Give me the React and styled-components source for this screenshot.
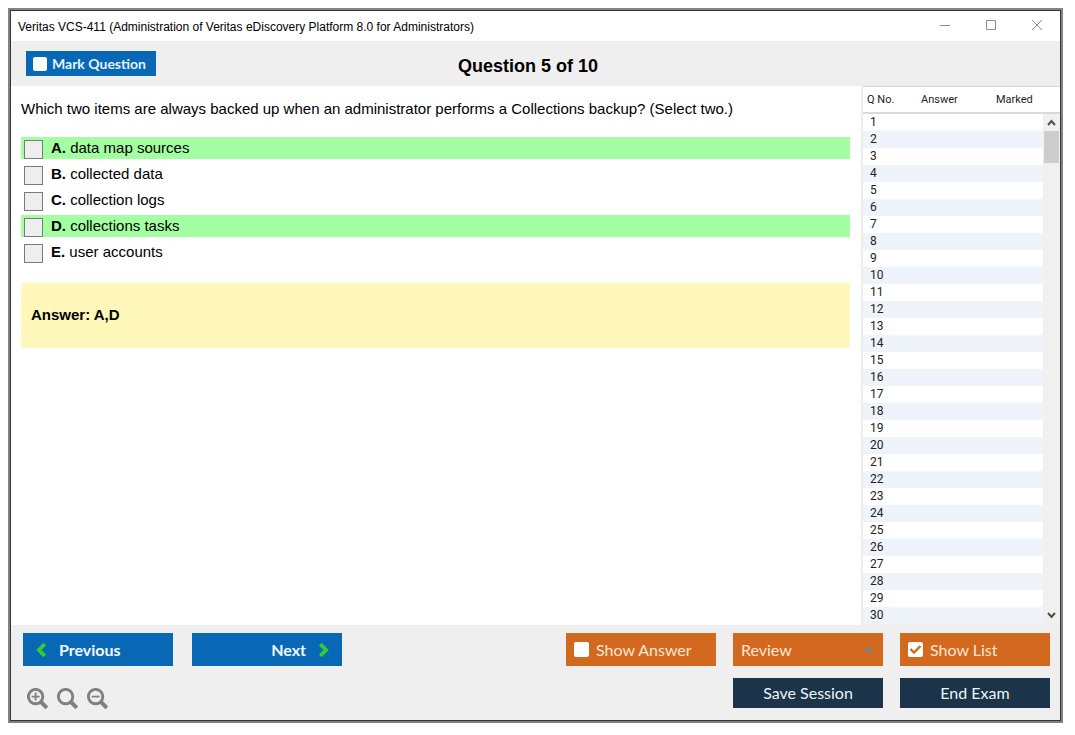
import React from "react";
import styled, { createGlobalStyle, css } from "styled-components";

const GlobalStyle = createGlobalStyle`
  *, *::before, *::after { box-sizing: border-box; }
  body {
    margin: 8px 12px 12px 8px;
    background: #fff;
    color: #000;
    font-family: "Liberation Sans", Arial, sans-serif;
  }
  button, select, input { margin: 0; font: inherit; }
`;

const Window = styled.div`
  display: flex;
  flex-direction: column;
  min-height: calc(100vh - 20px);
  border: 2px solid #828282;
`;

const Frame = styled.div`
  flex: 1;
  display: flex;
  flex-direction: column;
  border: 1px solid #38363a;
`;

const TitleBar = styled.div`
  display: flex;
  align-items: center;
  height: 30px;
  padding-left: 7px;
`;

const Title = styled.span`
  flex: 1;
  padding-top: 2px;
  font-size: 12px;
  line-height: 16px;
`;

const WindowButton = styled.button`
  display: flex;
  align-items: center;
  justify-content: center;
  width: 46px;
  height: 30px;
  padding: 0;
  border: 0;
  background: transparent;
  color: #8c8c8c;
`;

const Header = styled.header`
  display: grid;
  grid-template-columns: 1fr auto 1fr;
  align-items: center;
  height: 45px;
  padding: 0 30px 0 15px;
  background: #efefef;
`;

const Heading = styled.h1`
  margin: 0;
  padding-top: 4px;
  font-size: 18px;
  line-height: 24px;
`;

const MarkToggle = styled.label`
  display: flex;
  align-items: center;
  justify-self: start;
  gap: 5px;
  width: 130px;
  height: 25px;
  padding: 0 7px;
  background: #0868b6;
  color: #e6f1fb;
  font: bold 14px/20px Lato, sans-serif;
  white-space: nowrap;
`;

const ToggleBox = styled.input`
  appearance: none;
  flex: none;
  width: ${(p) => p.$size}px;
  height: ${(p) => p.$size}px;
  border-radius: 2px;
  background: #fff;
  &:checked {
    background: #fff
      url("data:image/svg+xml,%3Csvg xmlns='http://www.w3.org/2000/svg' viewBox='0 0 15 15'%3E%3Cpath d='M2.5 7l3.5 3.5L12.5 4' fill='none' stroke='%23d2691e' stroke-width='2.4'/%3E%3C/svg%3E");
  }
`;

const Main = styled.main`
  flex: 1;
  display: flex;
`;

const Content = styled.section`
  flex: 1;
  padding: 13px 11px 0 10px;
  font-size: 15px;
  line-height: 20px;
`;

const Question = styled.p`
  margin: 0 0 18px;
`;

const Options = styled.div`
  display: flex;
  flex-direction: column;
  gap: 4px;
`;

const Option = styled.label`
  display: flex;
  align-items: flex-start;
  gap: 8px;
  height: 22px;
  padding-left: 3px;
  line-height: 22px;
  ${(p) => p.$correct && css`background: #a2ffa2;`}
`;

const OptionBox = styled.input`
  appearance: none;
  width: 19px;
  height: 19px;
  margin-top: 3px;
  border: 1px solid #7b7b7b;
  background: #eee;
  &:checked { background: #555; }
`;

const AnswerBox = styled.div`
  margin-top: 20px;
  padding: 22px 10px 23px;
  background: #fff8ba;
  font-weight: bold;
`;

const ListPanel = styled.aside`
  display: flex;
  align-items: stretch;
  border: solid #ededed;
  border-width: 0 0 1px 2px;
`;

const ListTable = styled.table`
  width: 180px;
  border-spacing: 0;
  table-layout: fixed;
  font-family: Roboto, sans-serif;
  color: #222;
`;

const HeadCell = styled.th`
  width: ${(p) => p.$width};
  height: 28px;
  padding: 0 0 0 4px;
  border-top: 1px solid #d4d4d4;
  border-bottom: 2px solid #d9d9d9;
  font-size: 11px;
  font-weight: normal;
  line-height: 16px;
  text-align: left;
`;

const ListRow = styled.tr`
  &:nth-child(even) { background: #eef4f9; }
`;

const ListCell = styled.td`
  height: 17px;
  padding: 0 0 0 7px;
  font-size: 12px;
  line-height: 17px;
`;

const ScrollColumn = styled.div`
  display: flex;
  flex-direction: column;
  width: 17px;
`;

const ScrollCorner = styled.div`
  height: 28px;
  border-top: 1px solid #d4d4d4;
  border-bottom: 2px solid #d9d9d9;
`;

const ScrollTrack = styled.div`
  flex: 1;
  display: flex;
  flex-direction: column;
  background: #f0f0f0;
`;

const ScrollButton = styled.button`
  display: flex;
  align-items: center;
  justify-content: center;
  height: 17px;
  padding: 0;
  border: 0;
  background: transparent;
  color: #505050;
`;

const ScrollThumb = styled.div`
  height: 32px;
  margin: 0 1px;
  background: #cdcdcd;
`;

const ScrollSpace = styled.div`
  flex: 1;
`;

const Footer = styled.footer`
  display: flex;
  flex-direction: column;
  gap: 12px;
  padding: 8px 10px 10px 12px;
  background: #efefef;
`;

const FooterRow = styled.div`
  display: flex;
  justify-content: space-between;
  align-items: flex-start;
`;

const Group = styled.div`
  display: flex;
  gap: ${(p) => p.$gap}px;
`;

const control = css`
  display: flex;
  align-items: center;
  width: 150px;
  height: 33px;
  border: 0;
  white-space: nowrap;
`;

const NavButton = styled.button`
  ${control}
  justify-content: ${(p) => (p.$end ? "flex-end" : "flex-start")};
  gap: 13px;
  padding: 0 13px;
  background: #0868b6;
  color: #f2f8fd;
  font: bold 16px/20px Lato, sans-serif;
`;

const OrangeToggle = styled.label`
  ${control}
  gap: 7px;
  padding: 0 8px;
  background: #d2691e;
  color: #fbe6d6;
  font: 16px/20px Lato, sans-serif;
`;

const SelectWrap = styled.div`
  position: relative;
`;

const ReviewSelect = styled.select`
  ${control}
  appearance: none;
  padding: 0 8px;
  border-radius: 0;
  background: #d2691e;
  color: #fbe6d6;
  font: 16px/20px Lato, sans-serif;
`;

const SelectArrow = styled.svg`
  position: absolute;
  top: 13px;
  right: 9px;
  pointer-events: none;
`;

const DarkButton = styled.button`
  ${control}
  justify-content: center;
  height: 30px;
  padding: 0;
  background: #1b344a;
  color: #eef3f7;
  font: 16px/20px Lato, sans-serif;
`;

const ZoomGroup = styled(Group)`
  padding: 10px 0 0 4px;
`;

const ZoomButton = styled.button`
  display: flex;
  padding: 0;
  border: 0;
  background: transparent;
  color: #808080;
`;

const OPTIONS = [
  { letter: "A", text: "data map sources", correct: true },
  { letter: "B", text: "collected data" },
  { letter: "C", text: "collection logs" },
  { letter: "D", text: "collections tasks", correct: true },
  { letter: "E", text: "user accounts" },
];

const ROWS = Array.from({ length: 30 }, (_, i) => i + 1);

function WindowIcon({ d }) {
  return (
    <svg width="12" height="12" viewBox="0 0 12 12" fill="none" stroke="currentColor">
      <path d={d} />
    </svg>
  );
}

function Chevron({ d }) {
  return (
    <svg width="10" height="16" viewBox="0 0 10 16" fill="none" stroke="#32cd32" strokeWidth="3.8">
      <path d={d} />
    </svg>
  );
}

function ScrollArrow({ d }) {
  return (
    <svg width="9" height="7" viewBox="0 0 9 7" fill="none" stroke="currentColor" strokeWidth="2">
      <path d={d} />
    </svg>
  );
}

function Magnifier({ sign }) {
  return (
    <svg width="22" height="22" viewBox="0 0 22 22" fill="none" stroke="currentColor">
      <circle cx="8.6" cy="8.6" r="7.2" strokeWidth="2.9" />
      <path d="M13.5 13.5L19.8 19.8" strokeWidth="4" />
      {sign && <path d={sign} strokeWidth="1.8" />}
    </svg>
  );
}

export default function App() {
  return (
    <>
      <GlobalStyle />
      <Window>
        <Frame>
          <TitleBar>
            <Title>Veritas VCS-411 (Administration of Veritas eDiscovery Platform 8.0 for Administrators)</Title>
            <WindowButton aria-label="Minimize"><WindowIcon d="M1 5.5H11" /></WindowButton>
            <WindowButton aria-label="Maximize"><WindowIcon d="M1.5 .5H10.5V9.5H1.5Z" /></WindowButton>
            <WindowButton aria-label="Close"><WindowIcon d="M1 0L11 10M11 0L1 10" /></WindowButton>
          </TitleBar>

          <Header>
            <MarkToggle>
              <ToggleBox type="checkbox" $size={14} />
              Mark Question
            </MarkToggle>
            <Heading>Question 5 of 10</Heading>
          </Header>

          <Main>
            <Content>
              <Question>
                Which two items are always backed up when an administrator performs a Collections backup? (Select two.)
              </Question>
              <Options>
                {OPTIONS.map((o) => (
                  <Option key={o.letter} $correct={o.correct}>
                    <OptionBox type="checkbox" />
                    <span><b>{o.letter}.</b> {o.text}</span>
                  </Option>
                ))}
              </Options>
              <AnswerBox>Answer: A,D</AnswerBox>
            </Content>

            <ListPanel>
              <ListTable>
                <thead>
                  <tr>
                    <HeadCell $width="54px">Q No.</HeadCell>
                    <HeadCell $width="75px">Answer</HeadCell>
                    <HeadCell $width="auto">Marked</HeadCell>
                  </tr>
                </thead>
                <tbody>
                  {ROWS.map((n) => (
                    <ListRow key={n}>
                      <ListCell>{n}</ListCell>
                      <ListCell />
                      <ListCell />
                    </ListRow>
                  ))}
                </tbody>
              </ListTable>
              <ScrollColumn>
                <ScrollCorner />
                <ScrollTrack>
                  <ScrollButton aria-label="Scroll up"><ScrollArrow d="M1 6L4.5 2L8 6" /></ScrollButton>
                  <ScrollThumb />
                  <ScrollSpace />
                  <ScrollButton aria-label="Scroll down"><ScrollArrow d="M1 1L4.5 5L8 1" /></ScrollButton>
                </ScrollTrack>
              </ScrollColumn>
            </ListPanel>
          </Main>

          <Footer>
            <FooterRow>
              <Group $gap={19}>
                <NavButton><Chevron d="M8.7 2L2.9 8L8.7 14" />Previous</NavButton>
                <NavButton $end>Next<Chevron d="M1.3 2L7.1 8L1.3 14" /></NavButton>
              </Group>
              <Group $gap={17}>
                <OrangeToggle>
                  <ToggleBox type="checkbox" $size={15} />
                  Show Answer
                </OrangeToggle>
                <SelectWrap>
                  <ReviewSelect aria-label="Review"><option>Review</option></ReviewSelect>
                  <SelectArrow width="11" height="6" viewBox="0 0 11 6"><path d="M0 6L5.5 0L11 6Z" fill="#8a8078" /></SelectArrow>
                </SelectWrap>
                <OrangeToggle>
                  <ToggleBox type="checkbox" $size={15} defaultChecked />
                  Show List
                </OrangeToggle>
              </Group>
            </FooterRow>
            <FooterRow>
              <ZoomGroup $gap={8}>
                <ZoomButton aria-label="Zoom in"><Magnifier sign="M4.6 8.6H12.6M8.6 4.6V12.6" /></ZoomButton>
                <ZoomButton aria-label="Reset zoom"><Magnifier /></ZoomButton>
                <ZoomButton aria-label="Zoom out"><Magnifier sign="M4.6 8.6H12.6" /></ZoomButton>
              </ZoomGroup>
              <Group $gap={17}>
                <DarkButton>Save Session</DarkButton>
                <DarkButton>End Exam</DarkButton>
              </Group>
            </FooterRow>
          </Footer>
        </Frame>
      </Window>
    </>
  );
}
